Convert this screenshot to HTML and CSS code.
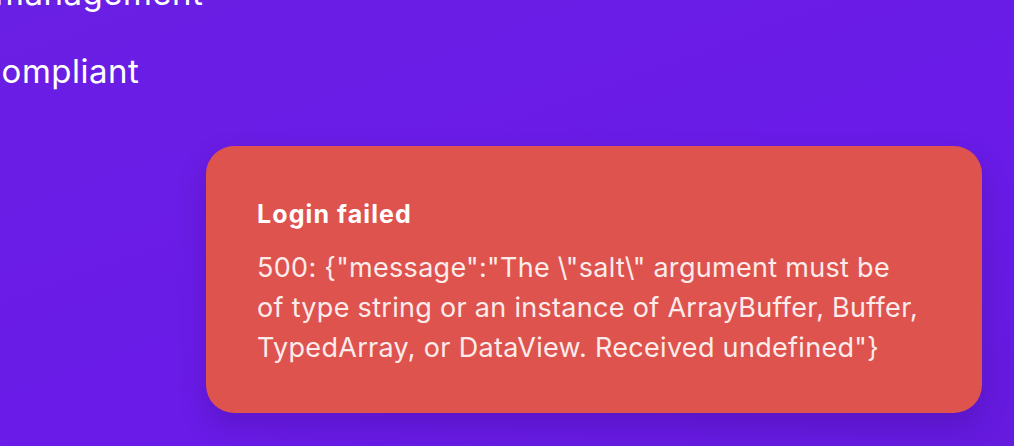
FILE: index.html
```html
<!DOCTYPE html>
<html lang="en">
<head>
<meta charset="utf-8">
<title>Login failed</title>
<link rel="stylesheet" href="styles.css">
</head>
<body>
<main class="page">
  <ul class="features">
    <li class="feature feature-top">management</li>
    <li class="feature feature-second">Compliant</li>
  </ul>
  <div class="toast" role="alert">
    <div class="toast-title">Login failed</div>
    <div class="toast-body">500: {"message":"The \"salt\" argument must be of type string or an instance of ArrayBuffer, Buffer, TypedArray, or DataView. Received undefined"}</div>
  </div>
</main>
</body>
</html>
```

FILE: styles.css
```css
html, body {
  margin: 0;
  padding: 0;
  height: 100%;
  overflow: hidden;
}
body {
  background: linear-gradient(160deg, #6a1fe4 0%, #6a1be8 60%, #651ade 100%);
  font-family: Inter, "Noto Sans", sans-serif;
  color: #fff;
}
.page {
  display: flex;
  flex-direction: column;
}
.features {
  list-style: none;
  margin: -27px 0 0 0;
  padding: 0;
  display: flex;
  flex-direction: column;
  gap: 38px;
}
.feature {
  font-size: 33px;
  line-height: 40px;
  letter-spacing: 0.5px;
  white-space: nowrap;
}
.feature-top {
  margin-left: -5px;
}
.feature-second {
  margin-left: -23px;
}
.toast {
  margin: 55px 0 0 206px;
  width: 776px;
  height: 267px;
  box-sizing: border-box;
  padding: 53px 51px 0;
  background: #de534e;
  border-radius: 28px;
  box-shadow: 0 12px 28px rgba(40, 0, 90, 0.22);
}
.toast-title {
  font-size: 25px;
  font-weight: 700;
  line-height: 30px;
  letter-spacing: 1.1px;
  color: #fff;
}
.toast-body {
  margin-top: 19px;
  font-size: 27px;
  line-height: 40px;
  letter-spacing: 0.3px;
  color: #fbeceb;
  max-width: 662px;
}
```
